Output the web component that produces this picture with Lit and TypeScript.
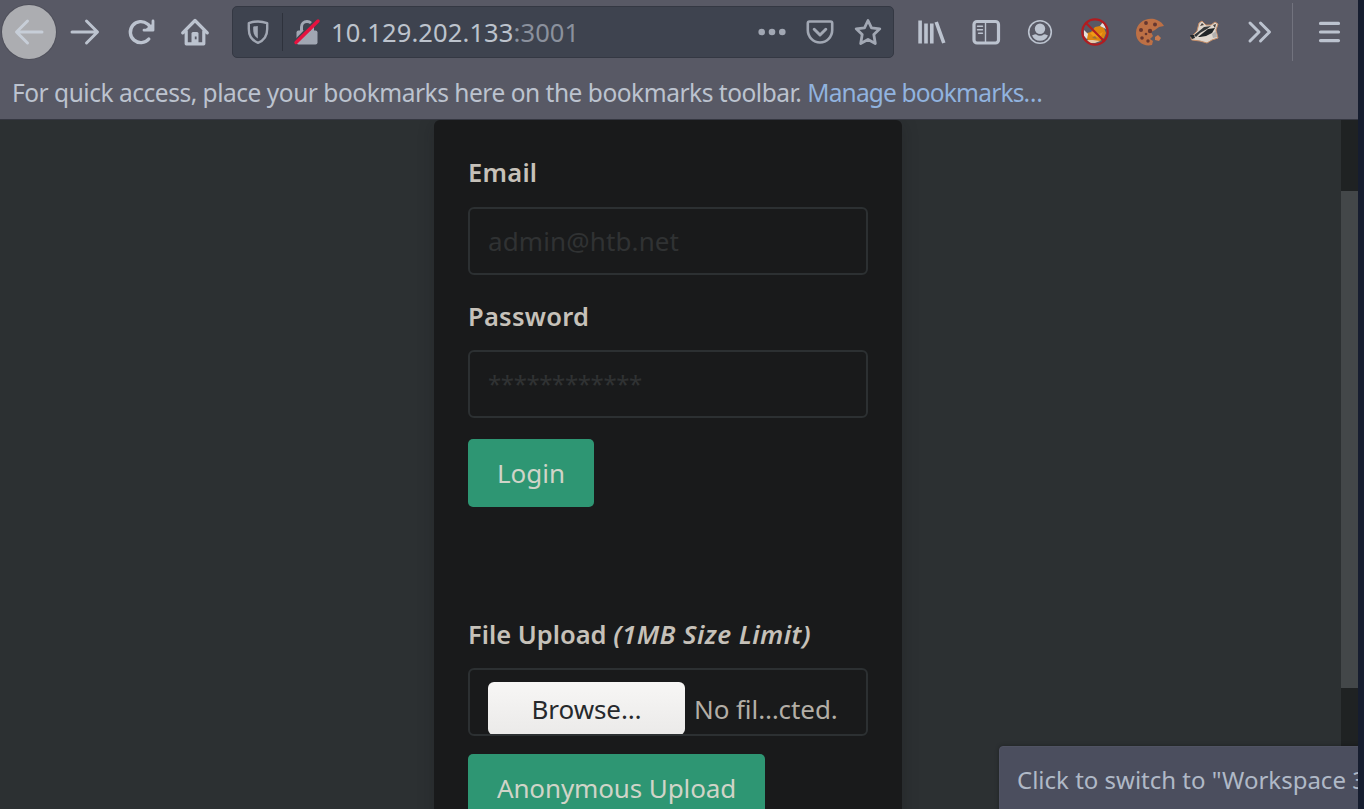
import { LitElement, html, css, svg } from "lit";
import { customElement } from "lit/decorators.js";

// Icons are drawn on a 40px grid whose origin is the middle of the icon.
const icons = {
  back: svg`<path d="M13 0H-12M-1.500 -11L-12.500 0L-1.500 11" stroke-width="3"/>`,
  forward: svg`<path d="M-13 0H12M1.500 -11L12.500 0L1.500 11" stroke-width="3"/>`,
  reload: svg`<path d="M6.500 -8A10.500 10.500 0 1 0 7.800 7" stroke-width="3.400"/><path d="M12 -11V-1.800H3" stroke-width="2.800"/><path d="M12 -9V-1.800H3.500L7 -5L5 -8L8 -9L10 -7Z" fill="currentColor" stroke="none"/>`,
  home: svg`<path d="M-12.300 .8L0 -11.500L12.300 .8M-8.800 -1V11.800H8.800V-1" stroke-width="3.200"/><path d="M-3.500 12V1.500Q-3.500 0 -2 0H2Q3.500 0 3.500 1.500V12Z" fill="currentColor" stroke="none"/><rect x="-.2" y="4.500" width="1.800" height="2.800" fill="#585965" stroke="none"/>`,
  shield: svg`<path d="M0 -10.500C3 -10.500 6 -10 9.200 -8.900V-3C9.200 4 6 8.500 0 10.800C-6 8.500 -9.200 4 -9.200 -3V-8.900C-6 -10 -3 -10.500 0 -10.500Z" stroke-width="2.400"/><path d="M-.2 -6V6.500C-3.500 4.500 -4.800 1.500 -4.800 -3V-5.200Q-2.500 -6 -.2 -6Z" fill="currentColor" stroke="none"/>`,
  lock: svg`<path d="M-5.500 0V-5A5.500 5.500 0 0 1 5.500 -5V0" stroke-width="3"/><rect x="-10.500" y="-1.500" width="21" height="14" rx="2" fill="currentColor" stroke="none"/><path d="M-11.500 9L9 -12" stroke="#3e434f" stroke-width="3"/><path d="M-11 10.500L11 -11" stroke="#e6123f" stroke-width="3.400"/>`,
  dots: svg`<g fill="currentColor" stroke="none"><circle cx="-10.300" r="3.300"/><circle r="3.300"/><circle cx="10.300" r="3.300"/></g>`,
  pocket: svg`<path d="M-10.500 -10.500H10.500Q12.200 -10.500 12.200 -8.800V-2A12.200 12.500 0 0 1 -12.200 -2V-8.800Q-12.200 -10.500 -10.500 -10.500Z" stroke-width="2.600"/><path d="M-5.800 -2.700L0 3L5.800 -2.700" stroke-width="3"/>`,
  star: svg`<path d="M0 -11.500L3.500 -4.200L11.800 -3.200L5.800 2.600L7.300 11.500L0 7.500L-7.300 11.500L-5.800 2.600L-11.800 -3.200L-3.500 -4.200Z" stroke-width="2.800"/>`,
  library: svg`<path d="M-10.900 -11.500V11.500M-5 -8.500V11.500M.8 -8.500V11.500M5.200 -10L12.800 11" stroke-width="3.600" stroke-linecap="butt"/>`,
  sidebar: svg`<rect x="-12" y="-10.500" width="24.500" height="21.500" rx="3" stroke-width="3.200"/><path d="M-.5 -10V10" stroke-width="1.400"/><path d="M-8.500 -5.700H-3.500M-8.500 -2.200H-3.500M-7.500 1.300H-3.500" stroke-width="1.400"/>`,
  account: svg`<circle r="11.300" stroke-width="1.600"/><circle cy="-3.300" r="5.200" fill="currentColor" stroke="none"/><path d="M-8 3.500Q-5.500 2.200 -4 2.200Q0 5.500 4 2.200Q5.500 2.200 8 3.500Q5.500 8.800 0 8.800Q-5.500 8.800 -8 3.500Z" fill="currentColor" stroke="none"/>`,
  fox: svg`<g stroke="none"><path d="M-8 1L-4 0L0 -5L5 -6L9 -4L11 1L9 6L5 9L-3 11L-8 7Z" fill="#dc850f"/><path d="M-11 -2L-7 2L-8 7L-11 4ZM5 -6L8 -10L11 -3Z" fill="#e8e1dc"/><path d="M-8 8L-2 8L5 9L0 11L-5 11Z" fill="#e5c9a8"/><path d="M-5 1L0 -1L4 2L8 0L5 6L-2 4Z" fill="#f09c16"/><path d="M-3 6L0 4L2 7Z" fill="#94713d"/></g><circle r="12.700" stroke="#b11c20" stroke-width="2.200"/><path d="M-9 -9L9 9" stroke="#b11c20" stroke-width="2.200"/>`,
  cookie: svg`<g stroke="none"><path d="M7 -12C-1 -16 -14 -11 -14 1C-14 10 -6 15 2 13L3 9L0 7L3 4L1 0L5 -2L9 -5L14 -6Q12 -10 7 -12Z" fill="#bd7045"/><path d="M5 5L8 3L11 6L9 9L5 8Z" fill="#c77a4d"/><g fill="#663730"><circle cx="-4" cy="-9" r="1.900"/><circle cx="5" cy="-7.500" r="2"/><circle cx="-9" cy="-2" r="2"/><circle cx="0" cy="-1" r="2.200"/><circle cx="-8" cy="6" r="1.800"/><circle cx="-2" cy="9" r="1.700"/><circle cx="-4" cy="2" r="1.300"/></g></g>`,
  badger: svg`<g stroke="none"><path d="M-13 5L-7 -1L-5 -9L-2 -11L2 -7L7 -7L11 -10L14 -8L12 -2L14 6L8 8L3 11L-4 9L-12 8Z" fill="#ded6cd" stroke="#c38c67" stroke-width="1"/><path d="M-10 3L-6 0L0 -5L7 -6L3 -3L-4 1L-8 5Z" fill="#34383a"/><path d="M-6 5L-1 1L4 -3L11 -4L8 1L2 4L-4 5Z" fill="#202426"/><path d="M-4 -6L-2 -9L0 -7ZM9 -7L12 -8L11 -4Z" fill="#44403d"/><path d="M-14 3L-10 3L-9 6L-12 7Z" fill="#24282b"/><path d="M8 2L12 -1L13 5L9 6Z" fill="#b2b0ae"/></g>`,
  more: svg`<path d="M-9 -9L0 0L-9 9M1.500 -9L10.500 0L1.500 9" stroke-width="3"/>`,
  menu: svg`<path d="M-8.500 -8.600H9.500M-8.500 0H9.500M-8.500 8.600H9.500" stroke-width="3.200"/>`,
};

const icon = (name: keyof typeof icons) =>
  html`<svg class="icon" viewBox="-20 -20 40 40">${icons[name]}</svg>`;

@customElement("browser-chrome")
class BrowserChrome extends LitElement {
  static styles = css`
    :host { display: block; height: 120px; box-sizing: border-box; background: #585965; border-bottom: 1px solid #353741; color: #bcc3cf; }
    .icon { width: 40px; height: 40px; display: block; flex: none; fill: none; stroke: currentColor; stroke-linecap: round; stroke-linejoin: round; }
    .nav { display: flex; align-items: center; height: 64px; }
    .cell { display: flex; justify-content: center; flex: none; width: 54px; }
    .fwd { width: 56.500px; }
    .back { width: 54px; height: 54px; margin-left: 2px; margin-right: 1px; align-items: center; border-radius: 50%; background: #acadb1; color: #c7ced8; box-shadow: 0 0 0 1px #50515c; }
    .url { display: flex; align-items: center; box-sizing: border-box; width: 662px; height: 52px; margin-left: 10.500px; border: 1px solid #343843; border-radius: 5px; background: #3e434f; color: #a1a7b3; flex: none; padding-left: 5px; }
    .split { width: 1px; height: 38px; background: #2e323c; margin: 0 4px; }
    .address { flex: 1; margin-left: 4px; font-size: 25.5px; line-height: 40px; letter-spacing: 0.11px; color: #bdc3cd; white-space: pre; }
    .port { color: #8b919d; }
    .act { width: 48px; display: flex; justify-content: center; flex: none; }
    .acts { display: flex; margin-right: 1px; }
    .tools { display: flex; flex: none; margin-left: 10px; }
    .tools .cell { width: 54.600px; }
    .rule { width: 1px; height: 58px; background: #72737e; margin-left: 6px; flex: none; }
    .menu { width: 72px; }
    .marks { font-size: 24.500px; line-height: 36px; padding: 11px 0 0 12px; white-space: pre; letter-spacing: -0.48px; }
    .link { color: #91b3df; letter-spacing: -0.82px; }
  `;
  render() {
    return html`
      <div class="nav">
        <div class="cell back">${icon("back")}</div>
        <div class="cell fwd">${icon("forward")}</div>
        <div class="cell">${icon("reload")}</div>
        <div class="cell">${icon("home")}</div>
        <div class="url">
          ${icon("shield")}<div class="split"></div>${icon("lock")}
          <div class="address">10.129.202.133<span class="port">:3001</span></div>
          <div class="acts">
            <div class="act">${icon("dots")}</div>
            <div class="act">${icon("pocket")}</div>
            <div class="act">${icon("star")}</div>
          </div>
        </div>
        <div class="tools">
          ${(["library", "sidebar", "account", "fox", "cookie", "badger", "more"] as const).map(
            (n) => html`<div class="cell">${icon(n)}</div>`
          )}
        </div>
        <div class="rule"></div>
        <div class="cell menu">${icon("menu")}</div>
      </div>
      <div class="marks"><span class="note">For quick access, place your bookmarks here on the bookmarks toolbar.</span> <span class="link">Manage bookmarks…</span></div>
    `;
  }
}

@customElement("login-card")
class LoginCard extends LitElement {
  static styles = css`
    :host { display: block; box-sizing: border-box; width: 468px; height: 720px; padding: 35px 34px 0; border-radius: 6px; background: #191a1b; box-shadow: 0 4px 16px rgba(20, 21, 22, 0.25); color: #c6c1b9; font-size: 26px; white-space: nowrap; }
    .label { font-weight: 600; font-size: 25.5px; letter-spacing: 0.25px; line-height: 34px; height: 34px; }
    .label i { font-size: 26px; letter-spacing: 0.42px; }
    .field { box-sizing: border-box; width: 400px; height: 68px; border: 2px solid #2c3032; border-radius: 6px; padding: 0 18px; line-height: 64px; letter-spacing: 0.12px; color: #303233; overflow: hidden; }
    .field.email { margin: 18px 0 24px; }
    .field.pass { margin: 17px 0 21px; font-size: 24px; letter-spacing: -0.4px; line-height: 64px; }
    .btn { display: flex; align-items: center; justify-content: center; width: 126px; height: 68px; border-radius: 5px; background: #2e9673; color: #d0d4c8; }
    .upload { margin-top: 110px; letter-spacing: 0; }
    .field.file { display: flex; margin: 17px 0 18px; color: #b3aea6; letter-spacing: -0.08px; }
    .browse { width: 197px; height: 53px; margin-top: 12px; border-radius: 6px; background: linear-gradient(#f7f6f5, #ebeae9); color: #26292c; text-align: center; line-height: 55px; flex: none; }
    .name { margin: 12px 0 0 9px; line-height: 55px; }
    .wide { width: 297px; letter-spacing: -0.12px; }
  `;
  render() {
    return html`
      <div class="label"><span>Email</span></div>
      <div class="field email"><span>admin@htb.net</span></div>
      <div class="label"><span>Password</span></div>
      <div class="field pass"><span>************</span></div>
      <div class="btn"><span>Login</span></div>
      <div class="label upload"><span>File Upload <i>(1MB Size Limit)</i></span></div>
      <div class="field file">
        <div class="browse">Browse…</div>
        <div class="name">No fil…cted.</div>
      </div>
      <div class="btn wide"><span>Anonymous Upload</span></div>
    `;
  }
}

@customElement("app-root")
class AppRoot extends LitElement {
  static styles = css`
    :host { display: flex; position: relative; width: 1364px; height: 809px; overflow: hidden; font-family: "Noto Sans", sans-serif; background: #161d2f; }
    .window { width: 1358px; height: 809px; overflow: hidden; position: relative; }
    .page { display: flex; height: 689px; background: #2c3032; }
    .content { flex: 1; padding-left: 434px; overflow: hidden; }
    .scroll { width: 17px; background: #1f2223; padding-top: 71px; box-sizing: border-box; }
    .thumb { height: 497px; background: #434749; }
    .tip { position: absolute; left: 999px; top: 746px; width: 380px; height: 70px; box-sizing: border-box; border: 1px solid #505363; border-radius: 4px 0 0 0; background: #4b4e5e; color: #b0b9c7; font-size: 24px; line-height: 34px; padding: 16px 0 0 17px; white-space: pre; box-shadow: 0 0 4px rgba(0, 0, 0, 0.3); }
  `;
  render() {
    return html`
      <div class="window">
        <browser-chrome></browser-chrome>
        <div class="page">
          <div class="content"><login-card></login-card></div>
          <div class="scroll"><div class="thumb"></div></div>
        </div>
        <div class="tip">Click to switch to "Workspace 3"</div>
      </div>
    `;
  }
}
